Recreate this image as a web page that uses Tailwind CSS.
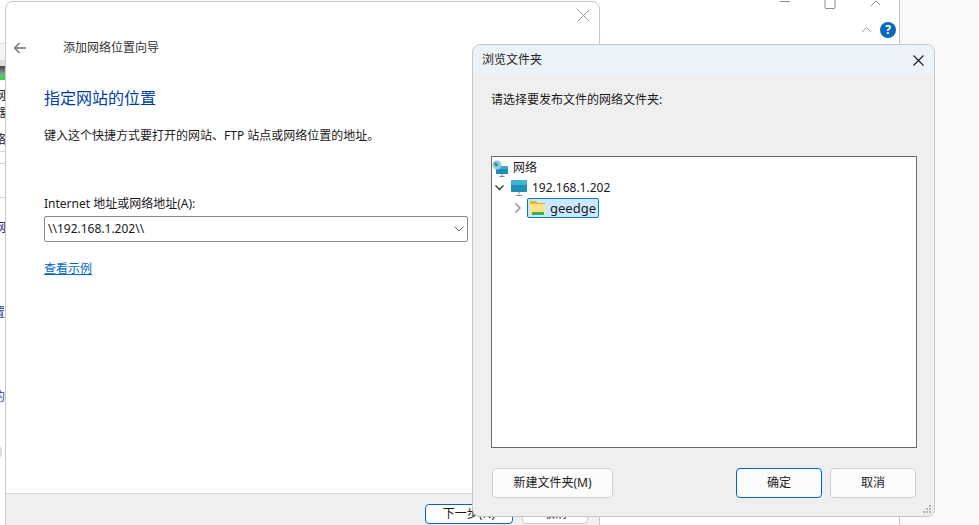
<!DOCTYPE html>
<html lang="zh-CN">
<head>
  <meta charset="UTF-8">
  <title>添加网络位置向导</title>
  <script src="https://cdn.jsdelivr.net/npm/@tailwindcss/browser@4"></script>
</head>
<body class="relative w-[979px] h-[525px] overflow-hidden bg-[#f9f9f9] text-[12px] text-[#1a1a1a] font-['Noto_Sans','Noto_Sans_CJK_SC',sans-serif]">

  <!-- Window behind, right part -->
  <div class="absolute left-[590px] top-0 w-[310px] h-[525px] bg-white border-r border-[#c4c4c4]">
    <svg class="absolute left-[190px] top-0" width="100" height="12" viewBox="0 0 100 12" fill="none" stroke="#8a8a8a">
      <path d="M0 1.500h10"/>
      <path d="M45 0v7.500a1 1 0 0 0 1 1h8a1 1 0 0 0 1-1V0"/>
      <path d="M91 6l5-5 5 5"/>
    </svg>
    <svg class="absolute left-[271px] top-[26px]" width="11" height="7" viewBox="0 0 11 7" fill="none" stroke="#a0a0a0"><path d="M1 6l4.500-4.500L10 6"/></svg>
    <div class="absolute left-[290px] top-[22px] w-4 h-4 rounded-full bg-[#0b68bd] text-white text-[12px] leading-4 text-center font-bold">?</div>
  </div>

  <!-- Window behind, left sliver -->
  <div class="absolute left-0 top-0 w-[6px] h-[525px] bg-white overflow-hidden text-[12px] leading-4 text-[#222]">
    <div class="absolute left-0 top-[43px] w-full h-[17px] bg-[#f5f5f5] border-t border-[#dcdcdc]"></div>
    <div class="absolute left-0 top-[60px] w-full h-[6px] bg-[#dedede]"></div>
    <div class="absolute left-0 top-[66px] w-full h-[8px] bg-gradient-to-b from-[#444] to-[#999]"></div>
    <div class="absolute left-0 top-[74px] w-full h-[6px] bg-[#4ccb5c]"></div>
    <div class="absolute left-0 top-[90px] w-full h-px bg-[#555]"></div>
    <span class="absolute left-[-6px] top-[88px]">网</span>
    <span class="absolute left-[-6px] top-[105px]">器</span>
    <span class="absolute left-[-6px] top-[132px]">络</span>
    <div class="absolute left-0 top-[151px] w-full h-px bg-[#d4d4d4]"></div>
    <div class="absolute left-0 top-[163px] w-full h-px bg-[#d4d4d4]"></div>
    <div class="absolute left-0 top-[197px] w-full h-px bg-[#d4d4d4]"></div>
    <span class="absolute left-[-6px] top-[220px] text-[#2b2b8c]">网</span>
    <span class="absolute left-[-7px] top-[305px] text-[#1f3fa0]">置</span>
    <span class="absolute left-[-7px] top-[389px] text-[#1f3fa0]">的</span>
    <div class="absolute left-[-9px] top-[445px] w-[11px] h-[14px] rounded-full bg-[#d6dbe6]"></div>
  </div>

  <!-- Wizard window -->
  <div class="absolute left-[5px] top-[1px] w-[595px] h-[530px] flex flex-col bg-white border border-[#c8c8c8] rounded-t-[8px]">
    <div class="flex justify-end pt-[7px] pr-[9px] h-[30px]">
      <svg width="13" height="13" viewBox="0 0 13 13" fill="none" stroke="#9a9a9a"><path d="M1 1l11 11M12 1L1 12"/></svg>
    </div>
    <div class="flex items-center h-[32px]">
      <svg class="ml-[7px]" width="14" height="12" viewBox="0 0 14 12" fill="none" stroke="#707070" stroke-width="1.300"><path d="M13 6H1.500M6.500 1l-5 5 5 5"/></svg>
      <span class="ml-[36px] leading-4 text-[#333]">添加网络位置向导</span>
    </div>
    <div class="flex flex-col flex-1 pl-[38px] pr-[131px]">
      <h1 class="mt-[22px] text-[16px] leading-6 font-normal text-[#003da8]">指定网站的位置</h1>
      <p class="mt-[18px] leading-4">键入这个快捷方式要打开的网站、FTP 站点或网络位置的地址。</p>
      <label class="mt-[52px] leading-4">Internet 地址或网络地址(A):</label>
      <div class="mt-[4px] flex items-center justify-between h-[26px] pl-[3px] pr-[3px] border border-[#8a8a8a] rounded-[2px]">
        <span>\\192.168.1.202\\</span>
        <svg width="10" height="6" viewBox="0 0 10 6" fill="none" stroke="#666"><path d="M.5.5l4.500 4.500L9.500.5"/></svg>
      </div>
      <a class="mt-[19px] w-fit leading-4 text-[#0066cc] underline">查看示例</a>
    </div>
    <div class="h-[37px] bg-[#f0f0f0] border-t border-[#dcdcdc] flex justify-end gap-[9px] pt-[10px] pr-[11px]">
      <div class="w-[88px] h-[20px] bg-white border border-[#0067c0] rounded-[4px] text-center leading-[18px]">下一步(N)</div>
      <div class="w-[66px] h-[20px] bg-white border border-[#cccccc] rounded-[4px] text-center leading-[18px]">取消</div>
    </div>
  </div>

  <!-- Browse for folder dialog -->
  <div class="absolute left-[472px] top-[44px] w-[463px] h-[473px] flex flex-col bg-[#efefef] border border-[#c6c6c6] rounded-[8px] overflow-hidden">
    <div class="flex items-center justify-between h-[30px] pl-[9px] pr-[10px] bg-gradient-to-r from-[#ebf3f8] to-[#edf2fb]">
      <span class="leading-4 text-[#222]">浏览文件夹</span>
      <svg width="11" height="11" viewBox="0 0 11 11" fill="none" stroke="#1a1a1a" stroke-width="1.100"><path d="M.5.5l10 10M10.500.5l-10 10"/></svg>
    </div>
    <div class="flex flex-col flex-1 pl-[18px] pr-[17px]">
      <p class="mt-[17px] leading-4">请选择要发布文件的网络文件夹:</p>
      <div class="mt-[48px] h-[292px] pt-px bg-white border border-[#6a6a6a] text-[12px] text-[#1a1a1a]">
        <div class="flex items-center h-[20px]">
          <svg class="ml-[0px]" width="17" height="17" viewBox="0 0 17 17">
            <rect x="4" y="6" width="12" height="8" fill="#1f8fb5"/>
            <rect x="4" y="6" width="12" height="3" fill="#3aa9cc"/>
            <circle cx="5" cy="5" r="4.500" fill="#8fc7e6"/>
            <path d="M2 2.500l3 1 1 3-3-1z" fill="#3d7f3d"/>
            <path d="M10 14v2M7.500 16.500h5" stroke="#8a8a8a"/>
          </svg>
          <span class="ml-[4px] leading-4">网络</span>
        </div>
        <div class="flex items-center h-[20px]">
          <svg class="ml-[3px]" width="9" height="6" viewBox="0 0 9 6" fill="none" stroke="#333" stroke-width="1.300"><path d="M.5.5l4 4 4-4"/></svg>
          <svg class="ml-[7px]" width="16" height="16" viewBox="0 0 16 16">
            <rect x="0" y="0" width="16" height="12" rx="1" fill="#1f8fb5"/>
            <rect x="0" y="0" width="16" height="5" rx="1" fill="#3db7d6"/>
            <path d="M8 12v2.500M5 15.500h6" stroke="#8a8a8a"/>
          </svg>
          <span class="ml-[5px] leading-4">192.168.1.202</span>
        </div>
        <div class="flex items-center h-[20px]">
          <svg class="ml-[23px]" width="6" height="10" viewBox="0 0 6 10" fill="none" stroke="#8a8a8a" stroke-width="1.300"><path d="M.5.5l4.500 4.500-4.500 4.500"/></svg>
          <div class="ml-[6px] flex items-center w-[72px] h-[20px] bg-[#cce8ff] border border-[#0078d4] rounded-[2px]">
            <svg class="ml-[1px]" width="17" height="16" viewBox="0 0 17 16">
              <path d="M1 1h6l2 2h7v3H1z" fill="#eeb31f"/>
              <rect x="1" y="4" width="15" height="11" fill="#fbe38e"/>
              <rect x="3" y="12" width="12" height="3" fill="#3fae49"/>
            </svg>
            <span class="ml-[4px] text-[13px] leading-4">geedge</span>
          </div>
        </div>
      </div>
      <div class="mt-[20px] flex">
        <div class="ml-px w-[121px] h-[30px] bg-[#fbfbfb] border border-[#cfcfcf] rounded-[4px] text-center leading-7">新建文件夹(M)</div>
        <div class="ml-[123px] w-[86px] h-[30px] bg-[#fbfbfb] border border-[#0067c0] rounded-[4px] text-center leading-7">确定</div>
        <div class="ml-[8px] w-[86px] h-[30px] bg-[#fbfbfb] border border-[#cfcfcf] rounded-[4px] text-center leading-7">取消</div>
      </div>
    </div>
    <svg class="absolute right-[2px] bottom-[2px]" width="9" height="9" viewBox="0 0 9 9" fill="#b5b5b5">
      <rect x="6" y="0" width="2" height="2"/><rect x="3" y="3" width="2" height="2"/><rect x="6" y="3" width="2" height="2"/>
      <rect x="0" y="6" width="2" height="2"/><rect x="3" y="6" width="2" height="2"/><rect x="6" y="6" width="2" height="2"/>
    </svg>
  </div>
</body>
</html>
